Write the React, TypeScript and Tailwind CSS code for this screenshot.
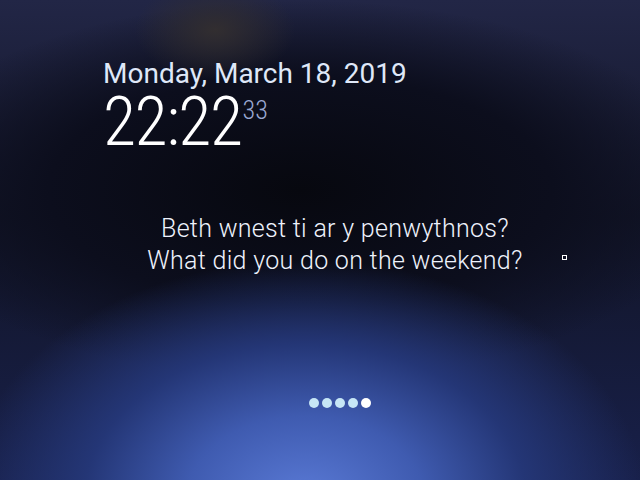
export default function App() {
  return (
    <div className="relative h-[480px] w-[640px] overflow-hidden bg-[#11142a] bg-[radial-gradient(ellipse_340px_240px_at_305px_500px,#5a7ad6_0%,#3f5bb0_35%,#243676_65%,transparent_100%),radial-gradient(ellipse_80px_50px_at_215px_30px,#322e30_0%,transparent_100%),radial-gradient(ellipse_420px_190px_at_300px_190px,#07080f_0%,#0c0e1d_60%,transparent_100%),linear-gradient(180deg,#222646_0%,#121528_45%,#18204a_100%)] font-['Roboto',sans-serif]">
      <div className="flex flex-col pl-[103px] pt-[57px] text-[#dfe8f8]">
        <div className="text-[28px] leading-[34px]">Monday, March 18, 2019</div>
        <div className="mt-[2px] flex items-start">
          <span className="text-[68px] font-light leading-[58px] tracking-[-1.5px] text-white [font-stretch:75%]">22:22</span>
          <span className="ml-[1px] mt-[3px] text-[26px] font-light leading-[28px] text-[#9aa8d2] [font-stretch:75%]">33</span>
        </div>
      </div>
      <div className="mt-[62px] flex flex-col items-center pl-[30px] text-[25px] font-light leading-[32px] tracking-[0.3px] text-[#eef2fc]">
        <div>Beth wnest ti ar y penwythnos?</div>
        <div>What did you do on the weekend?</div>
      </div>
      <div className="absolute left-[562px] top-[255px] h-[5px] w-[5px] border border-white" />
      <div className="mt-[121px] flex justify-center gap-[3px] pl-[40px]">
        <div className="h-[10px] w-[10px] rounded-full bg-[#c6e6f6]" />
        <div className="h-[10px] w-[10px] rounded-full bg-[#c6e6f6]" />
        <div className="h-[10px] w-[10px] rounded-full bg-[#c6e6f6]" />
        <div className="h-[10px] w-[10px] rounded-full bg-[#c6e6f6]" />
        <div className="h-[10px] w-[10px] rounded-full bg-white" />
      </div>
    </div>
  );
}
